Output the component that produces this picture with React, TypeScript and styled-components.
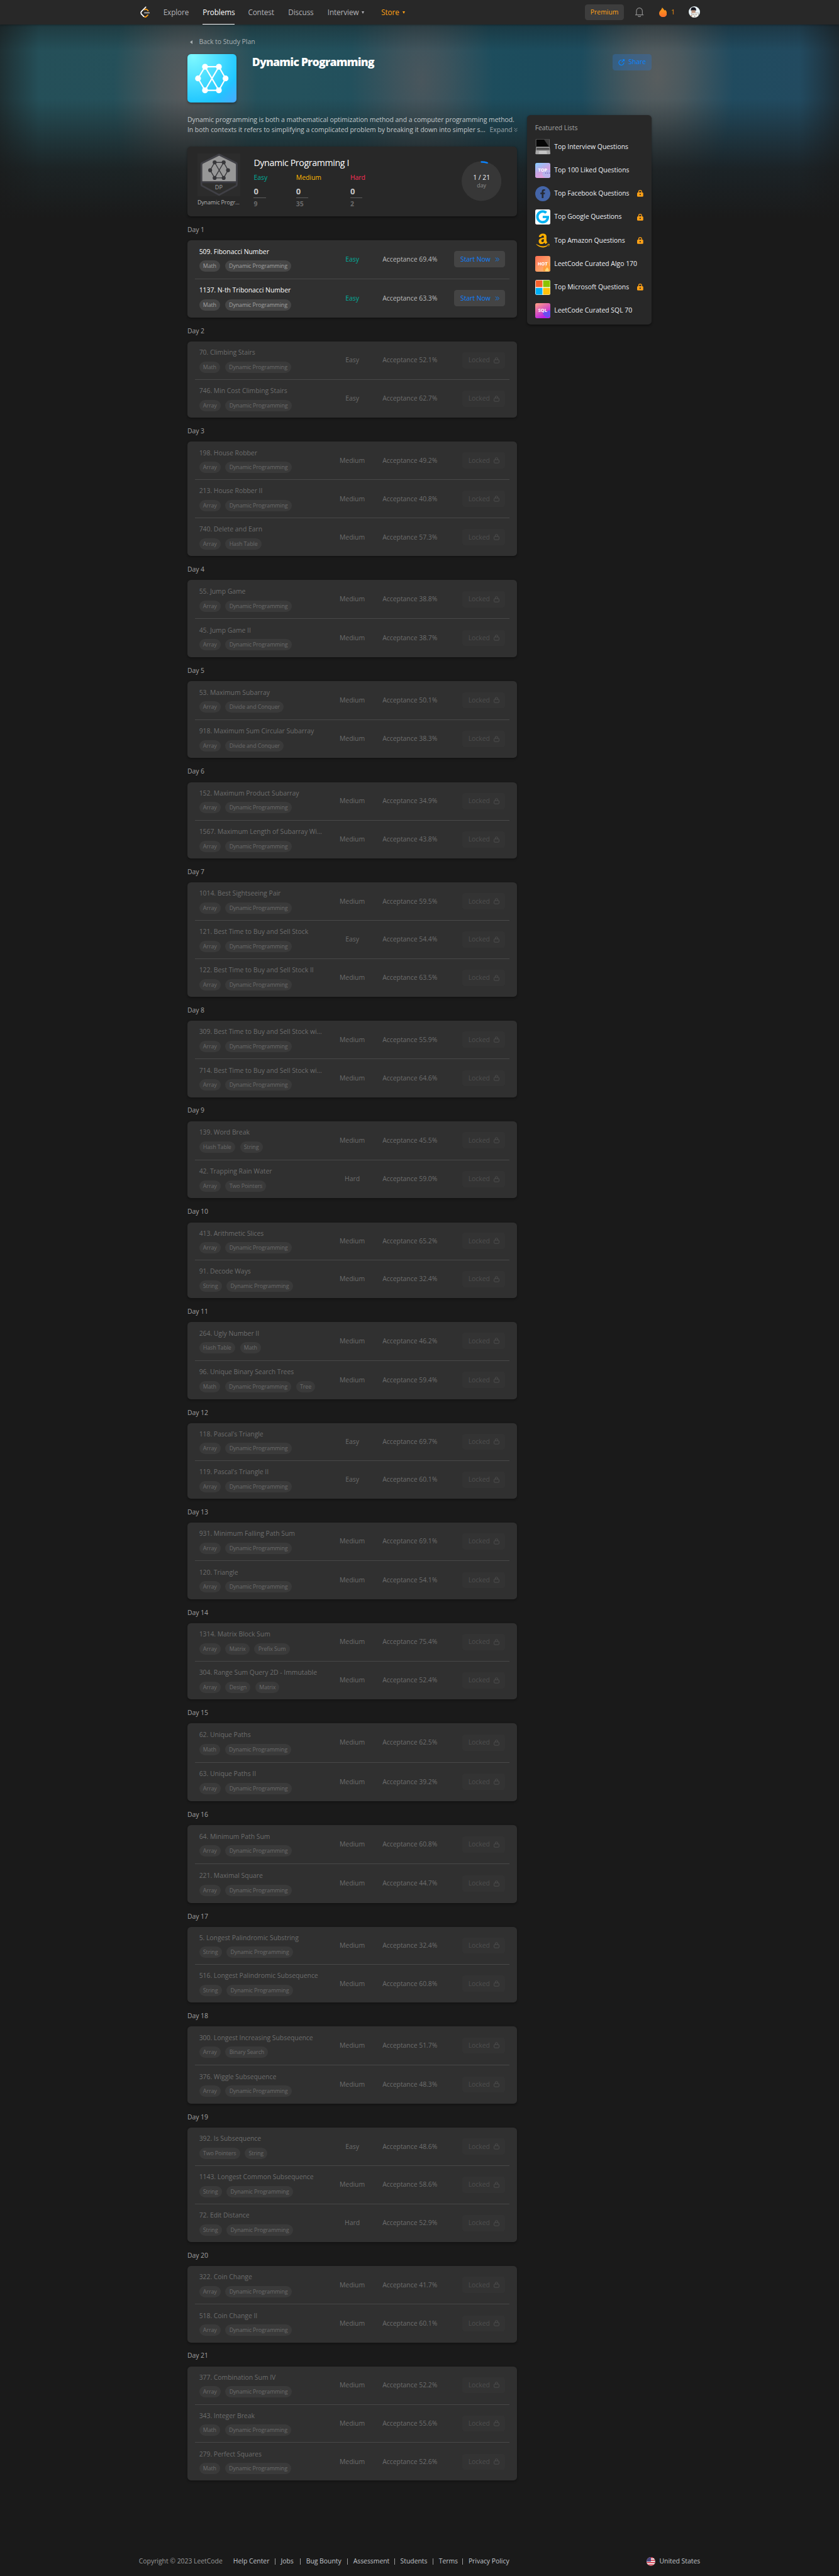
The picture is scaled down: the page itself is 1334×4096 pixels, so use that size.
import React from "react";
import styled, { createGlobalStyle, css } from "styled-components";
import { FaAmazon, FaFacebookF, FaGoogle } from "react-icons/fa";

const GlobalStyle = createGlobalStyle`
  *, *::before, *::after { box-sizing: border-box; }
  html, body { margin: 0; padding: 0; background: #1a1a1a; overflow-x: hidden; }
  body { font-family: "Open Sans", "Noto Sans", sans-serif; }
`;

const text = (size: number, spacing = 0) => css`
  font-size: ${size}px;
  letter-spacing: ${spacing}em;
  white-space: nowrap;
`;

const Page = styled.div`
  zoom: 0.69443;
  width: 1921px;
  height: 5898px;
  display: flex;
  flex-direction: column;
  color: #eff1f6;
  background: #1a1a1a;
  ${text(15, -0.002)}
  line-height: 22px;
`;

/* ---------- top bar ---------- */
const TopBar = styled.header`
  position: relative;
  z-index: 2;
  flex: none;
  height: 56px;
  padding: 0 318px;
  display: flex;
  align-items: center;
  background: #282828;
  box-shadow: 0 1px 5px rgba(0, 0, 0, 0.45);
`;
const Logo = styled.svg`
  margin-left: 3px;
  margin-right: 29px;
`;
const Nav = styled.nav`
  display: flex;
  height: 56px;
  gap: 31px;
`;
const NavItem = styled.a<{ $active?: boolean; $accent?: boolean; $w: number }>`
  ${text(16.9, -0.008)}
  width: ${(p) => p.$w}px;
  display: flex;
  align-items: center;
  gap: 7px;
  padding-top: 2px;
  border-bottom: 2px solid ${(p) => (p.$active ? "#fff" : "transparent")};
  color: ${(p) => (p.$active ? "#fff" : p.$accent ? "#ffa116" : "#b3b3b8")};
`;
const Caret = styled.i`
  border: 4px solid transparent;
  border-top: 6px solid currentColor;
  border-bottom: 0;
`;
const Tools = styled.div`
  margin-left: auto;
  display: flex;
  align-items: center;
`;
const Premium = styled.button`
  ${text(15)}
  font-family: inherit;
  width: 89px;
  height: 37px;
  padding: 0;
  border: 0;
  border-radius: 6px;
  background: #3d3d3d;
  color: #ffa116;
  margin-right: 24px;
`;
const Streak = styled.span`
  display: flex;
  align-items: center;
  gap: 10px;
  color: #e8920f;
  margin: 0 32px 0 34px;
`;
const Avatar = styled.svg`
  border-radius: 50%;
`;

/* ---------- hero ---------- */
const Body = styled.div`
  flex: 1;
  padding: 0 429px;
  display: flex;
  flex-direction: column;
  background:
    linear-gradient(180deg, rgba(20, 20, 20, 0.35) 0, rgba(26, 26, 26, 0) 60px, rgba(26, 26, 26, 0) 170px, rgba(26, 26, 26, 0.45) 255px, rgba(26, 26, 26, 0.82) 330px, #1a1a1a 445px),
    linear-gradient(90deg, rgba(26, 26, 26, 0.6) 0, rgba(26, 26, 26, 0) 90px, rgba(26, 26, 26, 0) 1830px, rgba(26, 26, 26, 0.6) 1921px),
    radial-gradient(ellipse 165px 330px at 425px 150px, #575a5c 0, rgba(87, 90, 92, 0.75) 35%, rgba(87, 90, 92, 0) 100%),
    radial-gradient(ellipse 165px 330px at 965px 130px, rgba(80, 87, 92, 0.85) 0, rgba(80, 87, 92, 0.6) 35%, rgba(80, 87, 92, 0) 100%),
    radial-gradient(ellipse 175px 330px at 1505px 120px, #585d5e 0, rgba(88, 93, 94, 0.75) 35%, rgba(88, 93, 94, 0) 100%),
    linear-gradient(90deg, #254f58 0, #24515c 680px, #1c4c5d 1230px, #234a60 1921px);
  background-size: 100% 460px;
  background-repeat: no-repeat;
`;
const BackLink = styled.a`
  display: flex;
  align-items: center;
  gap: 15px;
  padding-left: 6px;
  margin-top: 29px;
  height: 22px;
  color: #a9b0b3;
`;
const BackArrow = styled.i`
  border: 5px solid transparent;
  border-right: 6px solid currentColor;
  border-left: 0;
`;
const Hero = styled.section`
  display: flex;
  align-items: flex-start;
  margin-top: 17px;
  height: 111px;
`;
const Cover = styled.div`
  width: 112px;
  height: 111px;
  border-radius: 8px;
  background: linear-gradient(135deg, rgba(70, 172, 255, 0) 72%, #46acff 98%), radial-gradient(circle at 12% 5%, #7df8ff 0, #1fc6ff 75%);
  box-shadow: 0 2px 5px rgba(0, 0, 0, 0.35);
`;
const Title = styled.h1`
  ${text(25.6, -0.046)}
  margin: 1px 0 0 36px;
  line-height: 32px;
  font-weight: 800;
  color: #fff;
`;
const Share = styled.button`
  font: inherit;
  letter-spacing: inherit;
  margin-left: auto;
  width: 90px;
  height: 37px;
  padding: 0;
  display: flex;
  align-items: center;
  justify-content: center;
  gap: 9px;
  border: 0;
  border-radius: 6px;
  background: rgba(48, 112, 190, 0.38);
  color: #0a84ff;
`;
const Columns = styled.div`
  display: flex;
  align-items: flex-start;
  justify-content: space-between;
  margin-top: 28px;
`;
const Main = styled.main`
  width: 755px;
`;
const Description = styled.div`
  color: #c3c8ca;
  line-height: 23px;
  height: 72px;
`;
const DescLine = styled.div`
  display: flex;
  align-items: center;
`;
const Expand = styled.a`
  display: flex;
  align-items: center;
  gap: 3px;
  margin-left: 10px;
  color: #9aa3a9;
`;

/* ---------- summary ---------- */
const Summary = styled.section`
  height: 160px;
  padding: 16px 36px 0 23px;
  display: flex;
  background: #282828;
  border-radius: 8px;
  box-shadow: 0 2px 5px rgba(0, 0, 0, 0.4);
`;
const Badge = styled.div`
  width: 98px;
  ${text(12.8, -0.008)}
  color: #b5b5b5;
`;
const BadgeArt = styled.div`
  display: grid;
  height: 98px;
  margin-bottom: 5px;
  > * { grid-area: 1 / 1; }
`;
const BadgeText = styled.span`
  ${text(13, 0.02)}
  align-self: end;
  justify-self: center;
  padding-bottom: 10px;
  line-height: 20px;
  color: #a5a5a5;
`;
const Stats = styled.div`
  margin-left: 31px;
  padding-top: 7px;
`;
const PlanName = styled.h2`
  ${text(20.4, -0.025)}
  margin: 0;
  font-weight: 400;
  line-height: 30px;
  color: #fff;
`;
const Levels = styled.div`
  display: flex;
  margin-top: 8px;
`;
const Level = styled.div<{ $color: string; $w: number }>`
  width: ${(p) => p.$w}px;
  color: ${(p) => p.$color};
`;
const Solved = styled.div`
  ${text(18.6)}
  width: 28px;
  margin-top: 8px;
  line-height: 25px;
  padding-bottom: 2px;
  font-weight: 700;
  color: #c8c8c8;
  border-bottom: 1px solid #5c5c5c;
`;
const Total = styled.div`
  ${text(15)}
  line-height: 24px;
  padding-top: 1px;
  font-weight: 700;
  color: #6a6a6a;
`;
const Ring = styled.div`
  margin: 18px 0 0 auto;
  width: 91px;
  height: 92px;
  display: grid;
  > * { grid-area: 1 / 1; }
`;
const RingLabel = styled.div`
  padding-top: 27px;
  text-align: center;
  line-height: 21px;
`;
const RingUnit = styled.div`
  ${text(12.8)}
  line-height: 19px;
  color: #8d8d8d;
`;

/* ---------- days ---------- */
const DayLabel = styled.h3`
  margin: 0;
  font: inherit;
  letter-spacing: inherit;
  height: 55px;
  line-height: 22px;
  padding-top: 20px;
  color: #a0a0a0;
`;
const DayCard = styled.section<{ $h: number }>`
  height: ${(p) => p.$h}px;
  padding: 0 18px;
  display: flex;
  flex-direction: column;
  background: #303030;
  border-radius: 8px;
  box-shadow: 0 2px 5px rgba(0, 0, 0, 0.3);
`;
const Row = styled.div<{ $open?: boolean }>`
  flex: 1;
  display: grid;
  grid-template-columns: 294px 113px 13px 1fr auto;
  align-items: center;
  padding: 0 9px;
  color: ${(p) => (p.$open ? "#bdbdbd" : "#6d6d6d")};
  & + & { border-top: 1px solid #484848; }
`;
const Problem = styled.div`
  display: flex;
  flex-direction: column;
  gap: 9px;
  width: 280px;
`;
const ProblemName = styled.a<{ $open?: boolean }>`
  color: ${(p) => (p.$open ? "#fff" : "inherit")};
`;
const Tags = styled.div`
  display: flex;
  gap: 11px;
`;
const Tag = styled.span<{ $open?: boolean }>`
  ${text(12.8, -0.012)}
  height: 26px;
  line-height: 26px;
  padding: 0 9px;
  border-radius: 13px;
  font-weight: 500;
  background: ${(p) => (p.$open ? "#464646" : "#3a3a3a")};
  color: ${(p) => (p.$open ? "#a2a2a2" : "#6c6c6c")};
`;
const Difficulty = styled.span<{ $color?: string }>`
  text-align: center;
  color: ${(p) => p.$color ?? "inherit"};
`;
const Acceptance = styled.span`
  grid-column: 4;
`;
const Action = styled.button<{ $open?: boolean }>`
  font: inherit;
  letter-spacing: inherit;
  width: ${(p) => (p.$open ? 117 : 98)}px;
  height: 37px;
  padding: 0;
  display: flex;
  align-items: center;
  justify-content: center;
  gap: ${(p) => (p.$open ? 10 : 9)}px;
  border: 0;
  border-radius: 6px;
  background: ${(p) => (p.$open ? "#444444" : "#333333")};
  color: ${(p) => (p.$open ? "#0f80ff" : "#4f4f4f")};
`;

/* ---------- sidebar ---------- */
const Sidebar = styled.aside`
  width: 285px;
  height: 480px;
  padding: 19px 18px 0;
  background: #282828;
  border-radius: 8px;
  box-shadow: 0 2px 5px rgba(0, 0, 0, 0.4);
`;
const SideTitle = styled.h3`
  font: inherit;
  letter-spacing: inherit;
  margin: 0 0 5.5px;
  color: #a6a6a6;
`;
const ListItem = styled.a`
  ${text(15)}
  height: 53.6px;
  display: flex;
  align-items: center;
  gap: 9px;
  padding-right: 1px;
  font-weight: 500;
  > svg:last-child { margin-left: auto; }
`;
const Tile = styled.span<{ $bg?: string; $round?: boolean; $color?: string }>`
  ${text(10.5, 0)}
  flex: none;
  width: 35px;
  height: 35px;
  display: flex;
  align-items: center;
  justify-content: center;
  overflow: hidden;
  font-weight: 700;
  border-radius: ${(p) => (p.$round ? "50%" : "4px")};
  background: ${(p) => p.$bg ?? "none"};
  color: ${(p) => p.$color ?? "#fff"};
`;
const LabelTile = styled(Tile)`
  display: grid;
  > * { grid-area: 1 / 1; }
`;
const TileText = styled.span`
  justify-self: center;
  align-self: center;
  z-index: 1;
`;

/* ---------- footer ---------- */
const Footer = styled.footer`
  flex: none;
  height: 64px;
  padding: 0 318px 2px;
  display: flex;
  align-items: center;
  color: #c2c6cc;
`;
const Copyright = styled.span`
  width: 216px;
  color: #9b9b9b;
`;
const FooterLink = styled.a<{ $w: number }>`
  width: ${(p) => p.$w}px;
`;
const Bar = styled.i`
  width: 1px;
  height: 15px;
  margin: 0 13px;
  background: #9b9b9b;
`;
const Region = styled.span`
  margin-left: auto;
  display: flex;
  align-items: center;
  gap: 9px;
`;

/* ---------- drawings ---------- */
type P = { pts: number[][]; r: number; w: number; color: string };
const Graph = ({ pts, r, w, color }: P) => (
  <g stroke={color} fill="none" strokeWidth={w}>
    <polygon points={pts.map((p) => p.join(",")).join(" ")} />
    <path d={`M${pts[0]}L${pts[3]}M${pts[1]}L${pts[4]}`} />
    {pts.map((p, i) => (
      <circle key={i} cx={p[0]} cy={p[1]} r={r} fill={color} stroke="none" />
    ))}
  </g>
);

const GoldLock = () => (
  <svg width="14" height="16" viewBox="0 0 14 16">
    <path d="M3.6 7V4.4a3.4 3.4 0 0 1 6.8 0V7" fill="none" stroke="#ffa116" strokeWidth="1.8" />
    <rect y="5.8" width="14" height="9.6" rx="2.2" fill="#ffa116" />
    <circle cx="7" cy="10.6" r="1.6" fill="#282828" />
  </svg>
);
const OutlineLock = () => (
  <svg width="13" height="15" viewBox="0 0 13 15" fill="none" stroke="currentColor" strokeWidth="1.4">
    <rect x="0.9" y="5.6" width="11.2" height="7.6" rx="1.8" />
    <path d="M3.6 5.6V4a2.9 2.9 0 0 1 5.8 0v1.6" />
  </svg>
);
const Chevrons = () => (
  <svg width="10" height="10" viewBox="0 0 10 10" fill="none" stroke="currentColor" strokeWidth="1.3">
    <path d="M1 .8 5 5 1 9.2M5.2.8 9.2 5 5.2 9.2" />
  </svg>
);

const LaptopIcon = () => (
  <svg width="35" height="35" viewBox="0 0 35 35">
    <rect x="1" width="32" height="18" rx="2" fill="#6a6a6a" />
    <path d="M2.3 1h29.4v17H2.3z" fill="#050505" />
    <path d="M20 1h11.7v17z" fill="#3c3c3c" />
    <path d="M2 18h31l1.6 15q0 2-2 2H2.4q-2 0-2-2z" fill="#a9a9a9" />
    <path d="M3 20h29l.6 5.5H2.4z" fill="#3e3e3e" />
    <path d="M2.8 21.8h29.4M2.6 23.8h29.8" stroke="#8a8a8a" strokeWidth=".6" />
    <path d="M9 27.5h17l1 7H8z" fill="#c4c4c4" />
  </svg>
);

/* ---------- data ---------- */
type Item = [string, string, string, string[]];
const DP = "Dynamic Programming";
const days: { h: number; items: Item[] }[] = [
  { h: 177, items: [["509. Fibonacci Number", "Easy", "69.4%", ["Math", DP]], ["1137. N-th Tribonacci Number", "Easy", "63.3%", ["Math", DP]]] },
  { h: 174.5, items: [["70. Climbing Stairs", "Easy", "52.1%", ["Math", DP]], ["746. Min Cost Climbing Stairs", "Easy", "62.7%", ["Array", DP]]] },
  { h: 262, items: [["198. House Robber", "Medium", "49.2%", ["Array", DP]], ["213. House Robber II", "Medium", "40.8%", ["Array", DP]], ["740. Delete and Earn", "Medium", "57.3%", ["Array", "Hash Table"]]] },
  { h: 176.5, items: [["55. Jump Game", "Medium", "38.8%", ["Array", DP]], ["45. Jump Game II", "Medium", "38.7%", ["Array", DP]]] },
  { h: 176, items: [["53. Maximum Subarray", "Medium", "50.1%", ["Array", "Divide and Conquer"]], ["918. Maximum Sum Circular Subarray", "Medium", "38.3%", ["Array", "Divide and Conquer"]]] },
  { h: 175, items: [["152. Maximum Product Subarray", "Medium", "34.9%", ["Array", DP]], ["1567. Maximum Length of Subarray Wi...", "Medium", "43.8%", ["Array", DP]]] },
  { h: 261.5, items: [["1014. Best Sightseeing Pair", "Medium", "59.5%", ["Array", DP]], ["121. Best Time to Buy and Sell Stock", "Easy", "54.4%", ["Array", DP]], ["122. Best Time to Buy and Sell Stock II", "Medium", "63.5%", ["Array", DP]]] },
  { h: 175, items: [["309. Best Time to Buy and Sell Stock wi...", "Medium", "55.9%", ["Array", DP]], ["714. Best Time to Buy and Sell Stock wi...", "Medium", "64.6%", ["Array", DP]]] },
  { h: 176.5, items: [["139. Word Break", "Medium", "45.5%", ["Hash Table", "String"]], ["42. Trapping Rain Water", "Hard", "59.0%", ["Array", "Two Pointers"]]] },
  { h: 173, items: [["413. Arithmetic Slices", "Medium", "65.2%", ["Array", DP]], ["91. Decode Ways", "Medium", "32.4%", ["String", DP]]] },
  { h: 177, items: [["264. Ugly Number II", "Medium", "46.2%", ["Hash Table", "Math"]], ["96. Unique Binary Search Trees", "Medium", "59.4%", ["Math", DP, "Tree"]]] },
  { h: 172.5, items: [["118. Pascal's Triangle", "Easy", "69.7%", ["Array", DP]], ["119. Pascal's Triangle II", "Easy", "60.1%", ["Array", DP]]] },
  { h: 175.5, items: [["931. Minimum Falling Path Sum", "Medium", "69.1%", ["Array", DP]], ["120. Triangle", "Medium", "54.1%", ["Array", DP]]] },
  { h: 174.5, items: [["1314. Matrix Block Sum", "Medium", "75.4%", ["Array", "Matrix", "Prefix Sum"]], ["304. Range Sum Query 2D - Immutable", "Medium", "52.4%", ["Array", "Design", "Matrix"]]] },
  { h: 178, items: [["62. Unique Paths", "Medium", "62.5%", ["Math", DP]], ["63. Unique Paths II", "Medium", "39.2%", ["Array", DP]]] },
  { h: 178, items: [["64. Minimum Path Sum", "Medium", "60.8%", ["Array", DP]], ["221. Maximal Square", "Medium", "44.7%", ["Array", DP]]] },
  { h: 173, items: [["5. Longest Palindromic Substring", "Medium", "32.4%", ["String", DP]], ["516. Longest Palindromic Subsequence", "Medium", "60.8%", ["String", DP]]] },
  { h: 177, items: [["300. Longest Increasing Subsequence", "Medium", "51.7%", ["Array", "Binary Search"]], ["376. Wiggle Subsequence", "Medium", "48.3%", ["Array", DP]]] },
  { h: 261.5, items: [["392. Is Subsequence", "Easy", "48.6%", ["Two Pointers", "String"]], ["1143. Longest Common Subsequence", "Medium", "58.6%", ["String", DP]], ["72. Edit Distance", "Hard", "52.9%", ["String", DP]]] },
  { h: 175, items: [["322. Coin Change", "Medium", "41.7%", ["Array", DP]], ["518. Coin Change II", "Medium", "60.1%", ["Array", DP]]] },
  { h: 261.5, items: [["377. Combination Sum IV", "Medium", "52.2%", ["Array", DP]], ["343. Integer Break", "Medium", "55.6%", ["Math", DP]], ["279. Perfect Squares", "Medium", "52.6%", ["Math", DP]]] },
];

const featured: { name: string; icon: React.ReactNode; lock?: boolean }[] = [
  { name: "Top Interview Questions", icon: <LaptopIcon /> },
  {
    name: "Top 100 Liked Questions",
    icon: (
      <LabelTile $bg="linear-gradient(150deg,#8ccbff 5%,#c9a4e2 50%,#e0a0dc 75%)">
        <svg width="35" height="35">
          <ellipse cx="28" cy="25" rx="12" ry="9.5" fill="#b9b3ea" />
          <path d="M23 23.5h2M27.5 23.5h2M32 23.5h2" stroke="#6f63b8" strokeWidth="2" />
        </svg>
        <TileText>TOP</TileText>
      </LabelTile>
    ),
  },
  { name: "Top Facebook Questions", lock: true, icon: <Tile $bg="#4465a8" $round $color="#262a33"><FaFacebookF size={20} /></Tile> },
  { name: "Top Google Questions", lock: true, icon: <Tile $bg="#fff" $color="#06b3f2"><FaGoogle size={31} /></Tile> },
  { name: "Top Amazon Questions", lock: true, icon: <Tile $color="#ffb000"><FaAmazon size={36} /></Tile> },
  {
    name: "LeetCode Curated Algo 170",
    icon: (
      <LabelTile $bg="linear-gradient(135deg,#ff6f52,#ffa96a 70%,#ffc07a)">
        <svg width="35" height="35">
          <path d="M19 35c-3-6 1-10 1-14 2 1 3 3 3 5 3-3 5-7 4-12 5 3 5 7 5 10l2-2c2 5 1 10-1 13z" fill="#ff9d3d" />
          <path d="M23 35c-1-4 2-5 4-9 3 3 5 5 4 9z" fill="#ffd978" />
        </svg>
        <TileText>HOT</TileText>
      </LabelTile>
    ),
  },
  {
    name: "Top Microsoft Questions",
    lock: true,
    icon: (
      <Tile $bg="#fff">
        <svg width="35" height="35">
          <path d="M1 1h15.5v15.5H1z" fill="#f8612c" />
          <path d="M18 1h16v15.5H18z" fill="#8cc400" />
          <path d="M1 18.5h15.5V34H1z" fill="#00aff5" />
          <path d="M18 18.5h16V34H18z" fill="#ffc20a" />
        </svg>
      </Tile>
    ),
  },
  {
    name: "LeetCode Curated SQL 70",
    icon: (
      <LabelTile $bg="linear-gradient(150deg,#ff9a86 5%,#d552c0 50%,#b81ee8 80%)">
        <svg width="35" height="35">
          <path d="M28 34C19 28 16 24 18 20c2-3 7-3 9 0 3-5 8-4 10 0v8z" fill="#6a4df0" />
        </svg>
        <TileText>SQL</TileText>
      </LabelTile>
    ),
  },
];

const footerLinks: [string, number][] = [
  ["Help Center", 82], ["Jobs", 31], ["Bug Bounty", 81], ["Assessment", 81], ["Students", 61], ["Terms", 41], ["Privacy Policy", 93],
];

export default function App() {
  return (
    <>
      <GlobalStyle />
      <Page>
        <TopBar>
          <Logo width="24" height="26" viewBox="0 0 24 26" fill="none" strokeWidth="2.5" strokeLinecap="round">
            <path d="M10 8.2Q13 5.4 15.5 7.8L18 10.2M8 23.3Q11.5 26 14.5 22.8L17.3 20" stroke="#ffa116" />
            <path d="M10 15.1H20.6" stroke="#b3b3b3" />
            <path d="M12.6 1.8 2.6 12Q.9 14.5 2.4 17.5L8 23.3" stroke="#fff" />
          </Logo>
          <Nav>
            <NavItem $w={59}>Explore</NavItem>
            <NavItem $w={73} $active>Problems</NavItem>
            <NavItem $w={61}>Contest</NavItem>
            <NavItem $w={59}>Discuss</NavItem>
            <NavItem $w={92}>Interview <Caret /></NavItem>
            <NavItem $w={60} $accent>Store <Caret /></NavItem>
          </Nav>
          <Tools>
            <Premium>Premium</Premium>
            <svg width="22" height="22" viewBox="0 0 22 22" fill="none" stroke="#8f8f8f" strokeWidth="1.7">
              <path d="M1.5 16.8h19M4.2 16.5V7.8a6.8 6.8 0 0 1 13.6 0v8.7" />
              <path d="M8.3 19a2.7 2 0 0 0 5.4 0" />
            </svg>
            <Streak>
              <svg width="18" height="22" viewBox="0 0 18 22">
                <defs>
                  <linearGradient id="flame" x1="0" y1="0" x2="0" y2="1">
                    <stop offset="0" stopColor="#ffa116" />
                    <stop offset="1" stopColor="#f96c2c" />
                  </linearGradient>
                </defs>
                <path d="M7 0c1.5 2 4.5 4 5.500 7l1.700-1.500C16.500 8 18 10.500 18 13.500 18 18.500 14 22 9 22s-9-3.500-9-8.500C0 9 2.500 7.500 4.500 5 5.800 3.500 6.600 2 7 0z" fill="url(#flame)" />
              </svg>
              1
            </Streak>
            <Avatar width="26" height="26" viewBox="0 0 26 26">
              <rect width="26" height="26" fill="#eaf4f8" />
              <rect x="6.5" y="6" width="9" height="12" rx="3" fill="#d9a88c" />
              <path d="M5 10Q4 2 11 2t6 8l-2-1H7z" fill="#14161f" />
              <path d="M6 11h10" stroke="#555" strokeWidth="1" />
              <path d="M4 26v-6h4v6z" fill="#d9a88c" />
              <rect x="7" y="15" width="15" height="11" fill="#f1efe9" stroke="#777" strokeWidth=".7" />
              <path d="M10 18v2M13 19v1M17 18v2M14 22v2" stroke="#333" strokeWidth="1.2" />
            </Avatar>
          </Tools>
        </TopBar>

        <Body>
          <BackLink><BackArrow />Back to Study Plan</BackLink>
          <Hero>
            <Cover>
              <svg width="112" height="111" viewBox="0 0 112 111">
                <Graph color="#fff" r={6.7} w={3} pts={[[40.3, 29], [72, 29], [87.3, 55.7], [72, 83], [40.3, 83], [24.3, 55.7]]} />
              </svg>
            </Cover>
            <Title>Dynamic Programming</Title>
            <Share>
              <svg width="15" height="15" viewBox="0 0 15 15" fill="none" stroke="currentColor" strokeWidth="1.7">
                <path d="M8 2.2A5.8 5.8 0 1 0 13 8M10 1.3h3.7V5M13.4 1.6 8 7" />
              </svg>
              Share
            </Share>
          </Hero>
          <Columns>
            <Main>
              <Description>
                <DescLine>Dynamic programming is both a mathematical optimization method and a computer programming method.</DescLine>
                <DescLine>
                  In both contexts it refers to simplifying a complicated problem by breaking it down into simpler s...
                  <Expand>
                    Expand
                    <svg width="9" height="11" viewBox="0 0 9 11" fill="none" stroke="currentColor" strokeWidth="1.2">
                      <path d="M1 1l3.5 3.5L8 1M1 5.5 4.5 9 8 5.5" />
                    </svg>
                  </Expand>
                </DescLine>
              </Description>

              <Summary>
                <Badge>
                  <BadgeArt>
                    <svg width="98" height="98" viewBox="0 0 98 98">
                      <rect width="98" height="98" fill="#2c2c2c" />
                      <path d="M49.5 2.5 88.5 22q1.5 1 1.5 3v46q0 2-1.5 3L49.5 95 10.5 74Q9 73 9 71V25q0-2 1.5-3z" fill="#2e2e2d" stroke="#404046" strokeWidth="4" />
                      <path d="M49.5 5 86 23q2 1 2 3v38H11V26q0-2 2-3z" fill="#979797" />
                      <path d="M9 66h81" stroke="#3a3a41" strokeWidth="4" />
                      <Graph color="#37373a" r={4.5} w={2} pts={[[39.3, 20.5], [60, 20.5], [70, 38.4], [60, 56], [39.3, 56], [29, 38.4]]} />
                    </svg>
                    <BadgeText>DP</BadgeText>
                  </BadgeArt>
                  Dynamic Progr...
                </Badge>
                <Stats>
                  <PlanName>Dynamic Programming I</PlanName>
                  <Levels>
                    <Level $color="#00af9b" $w={97}>Easy<Solved>0</Solved><Total>9</Total></Level>
                    <Level $color="#ffb800" $w={124}>Medium<Solved>0</Solved><Total>35</Total></Level>
                    <Level $color="#ff2d55" $w={60}>Hard<Solved>0</Solved><Total>2</Total></Level>
                  </Levels>
                </Stats>
                <Ring>
                  <svg width="91" height="92" viewBox="0 0 91 92">
                    <circle cx="45.5" cy="46" r="45.5" fill="#373737" />
                    <path d="M45.5 2.2A43.8 43.8 0 0 1 58.5 4.2" fill="none" stroke="#0a84ff" strokeWidth="3.6" strokeLinecap="round" />
                  </svg>
                  <RingLabel>
                    1 / 21
                    <RingUnit>day</RingUnit>
                  </RingLabel>
                </Ring>
              </Summary>

              {days.map((day, d) => (
                <React.Fragment key={d}>
                  <DayLabel>Day {d + 1}</DayLabel>
                  <DayCard $h={day.h}>
                    {day.items.map(([name, level, rate, tags]) => {
                      const open = d === 0;
                      return (
                        <Row key={name} $open={open}>
                          <Problem>
                            <ProblemName $open={open}>{name}</ProblemName>
                            <Tags>{tags.map((t) => <Tag key={t} $open={open}>{t}</Tag>)}</Tags>
                          </Problem>
                          <Difficulty $color={open ? "#00af9b" : undefined}>{level}</Difficulty>
                          <Acceptance>Acceptance {rate}</Acceptance>
                          <Action $open={open}>
                            {open ? "Start Now" : "Locked"}
                            {open ? <Chevrons /> : <OutlineLock />}
                          </Action>
                        </Row>
                      );
                    })}
                  </DayCard>
                </React.Fragment>
              ))}
            </Main>

            <Sidebar>
              <SideTitle>Featured Lists</SideTitle>
              {featured.map((f) => (
                <ListItem key={f.name}>
                  {f.icon}
                  <span>{f.name}</span>
                  {f.lock && <GoldLock />}
                </ListItem>
              ))}
            </Sidebar>
          </Columns>
        </Body>

        <Footer>
          <Copyright>Copyright © 2023 LeetCode</Copyright>
          {footerLinks.map(([label, w], i) => (
            <React.Fragment key={label}>
              {i > 0 && <Bar />}
              <FooterLink $w={w}>{label}</FooterLink>
            </React.Fragment>
          ))}
          <Region>
            <svg width="20" height="20" viewBox="0 0 20 20">
              <defs><clipPath id="flag"><circle cx="10" cy="10" r="10" /></clipPath></defs>
              <g clipPath="url(#flag)">
                <rect width="20" height="20" fill="#f2f2f2" />
                <path d="M0 1.5h20M0 7h20M0 12.5h20M0 18h20" stroke="#d22f43" strokeWidth="2.7" />
                <rect width="10" height="10" fill="#46467f" />
              </g>
            </svg>
            United States
          </Region>
        </Footer>
      </Page>
    </>
  );
}
